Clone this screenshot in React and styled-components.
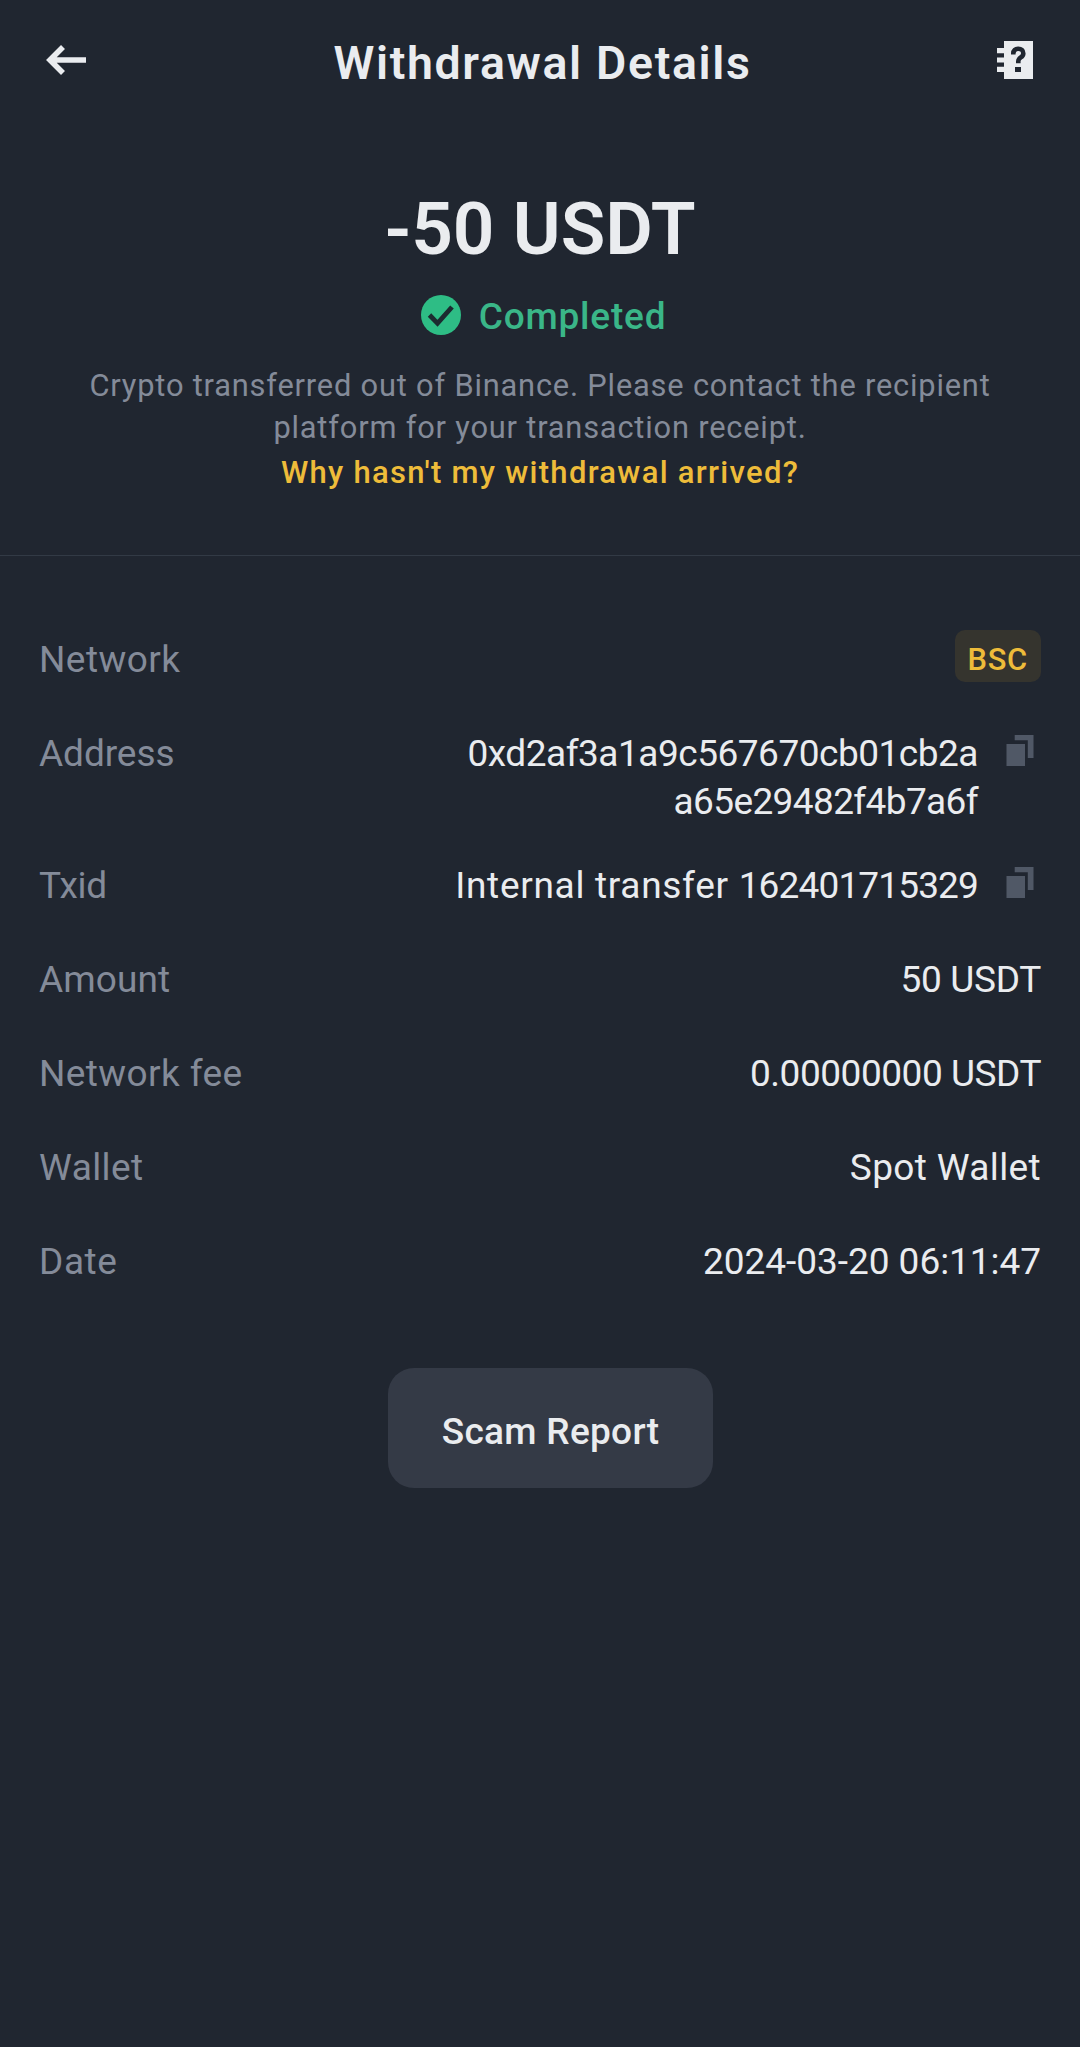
import React from "react";
import styled, { createGlobalStyle } from "styled-components";

const GlobalStyle = createGlobalStyle`
  * { box-sizing: border-box; }
  body { margin: 0; background: #202630; }
`;

const Screen = styled.main`
  min-height: 2047px;
  background: #202630;
  color: #eaecef;
  font-family: Roboto, "Noto Sans", sans-serif;
  font-size: 37px;
  line-height: 48px;
`;

const Header = styled.header`
  display: flex;
  align-items: center;
  justify-content: space-between;
  height: 126px;
  padding: 0 47px 0 46px;
`;

const IconButton = styled.button`
  display: flex;
  margin: 0 0 6px;
  padding: 0;
  border: 0;
  background: none;
  color: inherit;
`;

const Title = styled.h1`
  margin: 0;
  padding-left: 2px;
  font-size: 46.5px;
  font-weight: 600;
  line-height: 60px;
  letter-spacing: 1.64px;
`;

const Summary = styled.section`
  display: flex;
  flex-direction: column;
  align-items: center;
  height: 430px;
  padding-top: 59px;
  border-bottom: 1px solid #323a45;
`;

const Amount = styled.div`
  font-size: 73px;
  font-weight: 600;
  line-height: 88px;
`;

const Status = styled.div`
  display: flex;
  align-items: center;
  gap: 18px;
  margin-top: 20px;
  padding-left: 7px;
  color: #3ab688;
  font-weight: 500;
  letter-spacing: 0.8px;

  svg { margin-bottom: 4px; }
`;

const Description = styled.p`
  width: 930px;
  margin: 24px 0 0;
  color: #848b99;
  font-size: 30.8px;
  line-height: 42px;
  letter-spacing: 0.81px;
  text-align: center;
`;

const HelpLink = styled.a`
  margin-top: 3px;
  color: #eebc3a;
  font-size: 31px;
  font-weight: 500;
  line-height: 42px;
  letter-spacing: 1.29px;
`;

const Details = styled.section`
  display: flex;
  flex-direction: column;
  gap: 36px;
  padding: 80px 39px 0;
`;

const Row = styled.div`
  display: flex;
  align-items: flex-start;
  justify-content: space-between;
  min-height: 58px;
`;

const Label = styled.span`
  color: #848b99;
  letter-spacing: ${(p) => p.$spacing}px;
`;

const Value = styled.div`
  display: flex;
  gap: 28px;
  text-align: right;
`;

const Line = styled.span`
  display: block;
  letter-spacing: ${(p) => p.$spacing}px;
`;

const Digits = styled.span`
  letter-spacing: -0.85px;
`;

const CopyButton = styled(IconButton)`
  align-self: flex-start;
  margin: 5px 7px 0 0;
  color: #505866;
`;

const Badge = styled.span`
  height: 52px;
  margin-top: -6px;
  padding: 7px 13px 0 12px;
  border-radius: 10px;
  background: #35342e;
  color: #eebc3a;
  font-size: 30.8px;
  font-weight: 500;
  line-height: 45px;
  letter-spacing: 0.8px;
`;

const Actions = styled.div`
  display: flex;
  justify-content: center;
  padding: 72px 0 0 21px;
`;

const ReportButton = styled.button`
  width: 325px;
  height: 120px;
  padding: 7px 0 0;
  border: 0;
  border-radius: 26px;
  background: #343a46;
  color: inherit;
  font: inherit;
  font-weight: 500;
  letter-spacing: 0.3px;
`;

const BackIcon = () => (
  <svg width="40" height="30" viewBox="0 0 40 30" fill="none" stroke="currentColor" strokeWidth="5.6">
    <path d="M17 2 4 15l13 13M4 15h36" />
  </svg>
);

const GuideIcon = () => (
  <svg width="36" height="38" viewBox="0 0 36 38">
    <path fill="currentColor" d="M7 0h29v38H7v-7H0v-5.300h7v-4.200H0v-5h7v-4.200H0V7h7z" />
    <path d="M16.300 13.500v-1c0-3 2-4.700 5-4.700s5 1.800 5 4.600c0 4.500-5 3.600-5 7.900v2" fill="none" stroke="#202630" strokeWidth="4.600" />
    <path d="M18 26h6v5h-6z" fill="#202630" />
  </svg>
);

const CheckIcon = () => (
  <svg width="40" height="40" viewBox="0 0 40 40">
    <circle cx="20" cy="20" r="20" fill="#2ebd85" />
    <path d="m8.500 20 8 8.300 14.500-16.300" fill="none" stroke="#1c2b30" strokeWidth="4.800" />
  </svg>
);

const CopyIcon = () => (
  <svg width="28" height="31" viewBox="0 0 28 31" fill="currentColor">
    <path d="M.5 9H19v22H.5zM8.700 0h18.800v23h-5.700V5.300H8.700z" />
  </svg>
);

const rows = [
  { label: "Network", spacing: 0.46, badge: "BSC" },
  {
    label: "Address",
    spacing: -0.05,
    lines: [
      { text: "0xd2af3a1a9c567670cb01cb2a", spacing: -0.48 },
      { text: "a65e29482f4b7a6f", spacing: -0.62 },
    ],
    copy: true,
  },
  { label: "Txid", spacing: -0.3, lines: [{ text: "Internal transfer ", digits: "162401715329", spacing: 0.7 }], copy: true },
  { label: "Amount", spacing: 0.1, lines: [{ text: "50 USDT", spacing: -0.3 }] },
  { label: "Network fee", spacing: 0.4, lines: [{ text: "0.00000000 USDT", spacing: -0.46 }] },
  { label: "Wallet", spacing: 0.4, lines: [{ text: "Spot Wallet", spacing: 0.36 }] },
  { label: "Date", spacing: 0.6, lines: [{ text: "2024-03-20 06:11:47", spacing: -0.04 }] },
];

export default function App() {
  return (
    <>
      <GlobalStyle />
      <Screen>
        <Header>
          <IconButton aria-label="Back"><BackIcon /></IconButton>
          <Title>Withdrawal Details</Title>
          <IconButton aria-label="Guide"><GuideIcon /></IconButton>
        </Header>
        <Summary>
          <Amount>-50 USDT</Amount>
          <Status>
            <CheckIcon />
            <span>Completed</span>
          </Status>
          <Description>
            Crypto transferred out of Binance. Please contact the recipient platform for your transaction receipt.
          </Description>
          <HelpLink>Why hasn't my withdrawal arrived?</HelpLink>
        </Summary>
        <Details>
          {rows.map((row) => (
            <Row key={row.label}>
              <Label $spacing={row.spacing}>{row.label}</Label>
              {row.badge && <Badge>{row.badge}</Badge>}
              {row.lines && (
                <Value>
                  <div>
                    {row.lines.map((line) => (
                      <Line key={line.text} $spacing={line.spacing}>
                        {line.text}
                        {line.digits && <Digits>{line.digits}</Digits>}
                      </Line>
                    ))}
                  </div>
                  {row.copy && <CopyButton aria-label="Copy"><CopyIcon /></CopyButton>}
                </Value>
              )}
            </Row>
          ))}
        </Details>
        <Actions>
          <ReportButton>Scam Report</ReportButton>
        </Actions>
      </Screen>
    </>
  );
}
